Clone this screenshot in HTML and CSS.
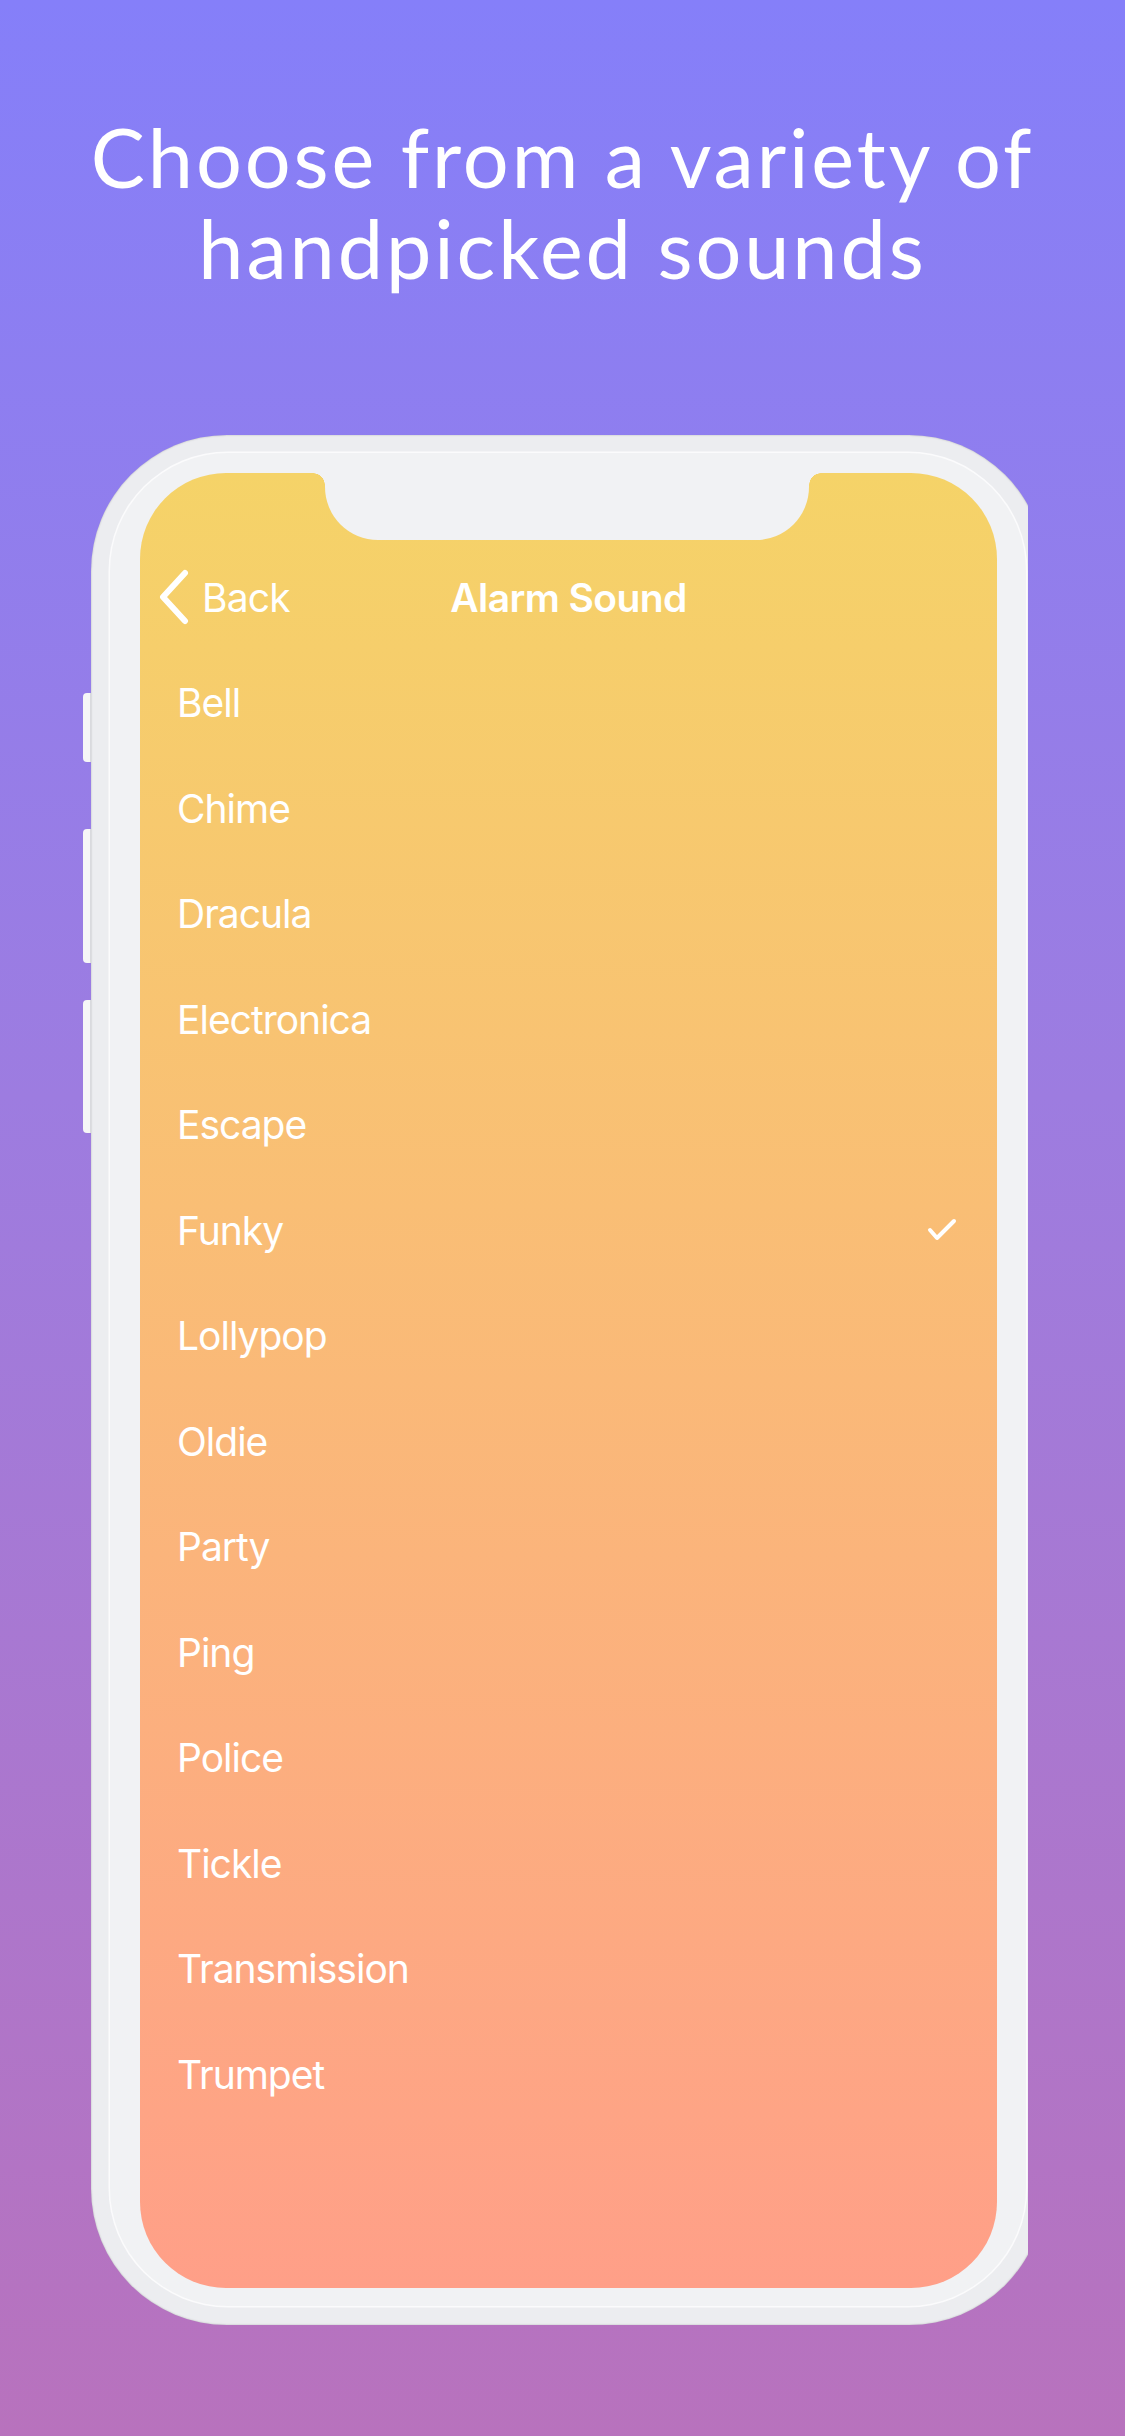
FILE: index.html
```html
<!DOCTYPE html>
<html lang="en">
<head>
<meta charset="utf-8">
<title>Alarm Sound</title>
<link rel="stylesheet" href="styles.css">
</head>
<body>
<div class="page">
  <h1 class="title">Choose from a variety of<br>handpicked sounds</h1>
  <div class="device">
    <div class="side-buttons">
      <span class="side-btn btn-mute"></span>
      <span class="side-btn btn-vol-up"></span>
      <span class="side-btn btn-vol-down"></span>
    </div>
    <div class="phone-clip">
      <div class="phone">
        <div class="bezel">
          <div class="screen">
            <div class="notch"></div>
            <div class="nav">
              <div class="back">
                <svg class="chevron" width="32" height="56" viewBox="0 0 32 56"><path d="M27 4 L5 28 L27 52" fill="none" stroke="#fff" stroke-width="6" stroke-linecap="round" stroke-linejoin="round"/></svg>
                <span>Back</span>
              </div>
              <div class="nav-title">Alarm Sound</div>
              <div></div>
            </div>
            <ul class="list">
              <li class="row">Bell</li>
              <li class="row">Chime</li>
              <li class="row">Dracula</li>
              <li class="row">Electronica</li>
              <li class="row">Escape</li>
              <li class="row selected">Funky
                <svg class="check" width="30" height="26" viewBox="0 0 30 26"><path d="M3 13 L10 21 L27 4" fill="none" stroke="#fff" stroke-width="4" stroke-linecap="round" stroke-linejoin="round"/></svg>
              </li>
              <li class="row">Lollypop</li>
              <li class="row">Oldie</li>
              <li class="row">Party</li>
              <li class="row">Ping</li>
              <li class="row">Police</li>
              <li class="row">Tickle</li>
              <li class="row">Transmission</li>
              <li class="row">Trumpet</li>
            </ul>
          </div>
        </div>
      </div>
    </div>
  </div>
</div>
</body>
</html>
```

FILE: styles.css
```css
html, body {
  margin: 0;
  padding: 0;
}

body {
  width: 1125px;
  height: 2436px;
  overflow: hidden;
  background: linear-gradient(180deg, #857ff9 0%, #9d7ce0 45%, #b872bd 100%);
  font-family: Inter, "Liberation Sans", sans-serif;
}

.page {
  width: 1125px;
  height: 2436px;
  display: flex;
  flex-direction: column;
}

.title {
  margin: 111px 0 0 0;
  font-family: Lato, "Open Sans", sans-serif;
  font-weight: 400;
  font-size: 81px;
  line-height: 91px;
  letter-spacing: 2.9px;
  color: #fff;
  text-align: center;
}

.device {
  margin-top: 142px;
  margin-left: 83px;
  display: flex;
  align-items: flex-start;
}

.side-buttons {
  width: 8px;
  display: flex;
  flex-direction: column;
  padding-top: 258px;
}

.side-btn {
  display: block;
  width: 8px;
  background: #f6f6f7;
  border-radius: 4px 0 0 4px;
  box-shadow: inset -1px 0 0 #d9dade;
}

.btn-mute { height: 69px; }
.btn-vol-up { height: 134px; margin-top: 67px; }
.btn-vol-down { height: 133px; margin-top: 37px; }

.phone-clip {
  width: 937px;
  overflow: hidden;
}

.phone {
  width: 954px;
  height: 1890px;
  box-sizing: border-box;
  padding: 18px 19px 19px 19px;
  border-radius: 136px;
  background: #ecedf0;
  box-shadow: inset 0 0 2px rgba(0, 0, 0, 0.25);
}

.bezel {
  height: 100%;
  box-sizing: border-box;
  padding: 20px 29px 18px 30px;
  border-radius: 118px;
  background: #f1f2f4;
  box-shadow: 0 0 0 1.5px #fbfbfc;
}

.screen {
  position: relative;
  height: 100%;
  box-sizing: border-box;
  padding-top: 74px;
  border-radius: 86px;
  background: linear-gradient(180deg, #f5d368 0%, #ff9f88 100%);
  overflow: hidden;
  color: #fff;
}

.notch {
  position: absolute;
  top: 0;
  left: 185px;
  width: 484px;
  height: 67px;
  background: #f1f2f4;
  border-radius: 0 0 53px 53px;
}

.notch::before,
.notch::after {
  content: "";
  position: absolute;
  top: 0;
  width: 12px;
  height: 12px;
}

.notch::before {
  left: -12px;
  background: radial-gradient(circle at 0 100%, transparent 11.5px, #f1f2f4 12px);
}

.notch::after {
  right: -12px;
  background: radial-gradient(circle at 100% 100%, transparent 11.5px, #f1f2f4 12px);
}

.nav {
  height: 100px;
  display: grid;
  grid-template-columns: 1fr auto 1fr;
  align-items: center;
}

.back {
  display: flex;
  align-items: center;
  padding-left: 18px;
  font-size: 39px;
  font-weight: 400;
  letter-spacing: -0.8px;
  gap: 12px;
}

.chevron {
  display: block;
}

.nav-title {
  font-size: 39px;
  font-weight: 600;
  letter-spacing: -0.6px;
}

.list {
  list-style: none;
  margin: 3px 0 0 0;
  padding: 0;
}

.row {
  height: 105.5px;
  display: flex;
  align-items: center;
  justify-content: space-between;
  padding: 0 40px 0 37px;
  font-size: 39px;
  font-weight: 400;
  letter-spacing: -1px;
}

.check {
  display: block;
}
```
